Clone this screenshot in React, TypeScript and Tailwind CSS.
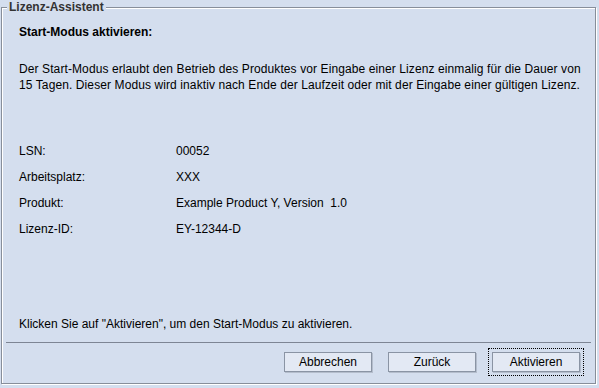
import React from 'react';

const rows: [string, string][] = [
  ['LSN:', '00052'],
  ['Arbeitsplatz:', 'XXX'],
  ['Produkt:', 'Example Product Y, Version  1.0'],
  ['Lizenz-ID:', 'EY-12344-D'],
];

const WizardButton: React.FC<{ label: string; focused?: boolean }> = ({ label, focused }) => (
  <button
    className={`h-[20px] w-[88px] border border-[#8a94a4] bg-[#e3e9f4] text-[12px] leading-[18px] text-black shadow-[1px_1px_0_#b4bdcc] ${
      focused ? 'outline outline-1 outline-dotted outline-black outline-offset-[3px]' : ''
    }`}
  >
    {label}
  </button>
);

export default function App() {
  return (
    <div className="w-[599px] h-[388px] bg-[#d4deee] pl-[1px] font-['Liberation_Sans',Arial,sans-serif] text-[12px] text-black">
      <fieldset className="w-[595px] border border-[#878e9a] shadow-[inset_1px_1px_0_#fff,1px_1px_0_#fff] pb-[11px]">
        <legend className="ml-[5px] px-[2px] bg-[#d4deee] text-[12px] leading-[14px] font-bold text-[#333]">
          Lizenz-Assistent
        </legend>

        <div className="pl-[17px]">
          <h1 className="mt-[10px] text-[12px] leading-[16px] font-bold">Start-Modus aktivieren:</h1>

          <p className="mt-[21px] leading-[16px] whitespace-nowrap tracking-[0.1px]">
            Der Start-Modus erlaubt den Betrieb des Produktes vor Eingabe einer Lizenz einmalig für die Dauer von
            <br />
            15 Tagen. Dieser Modus wird inaktiv nach Ende der Laufzeit oder mit der Eingabe einer gültigen Lizenz.
          </p>

          <div className="mt-[50px] grid grid-cols-[157px_1fr] gap-y-[10px] leading-[16px]">
            {rows.map(([label, value]) => (
              <React.Fragment key={label}>
                <span>{label}</span>
                <span className="whitespace-pre">{value}</span>
              </React.Fragment>
            ))}
          </div>

          <p className="mt-[79px] leading-[16px]">Klicken Sie auf "Aktivieren", um den Start-Modus zu aktivieren.</p>
        </div>

        <div className="mx-[4px] mt-[10px] h-[1px] w-[585px] bg-[#7d8594]" />

        <div className="mt-[9px] flex justify-end gap-[16px] pr-[15px]">
          <WizardButton label="Abbrechen" />
          <WizardButton label="Zurück" />
          <WizardButton label="Aktivieren" focused />
        </div>
      </fieldset>
    </div>
  );
}
